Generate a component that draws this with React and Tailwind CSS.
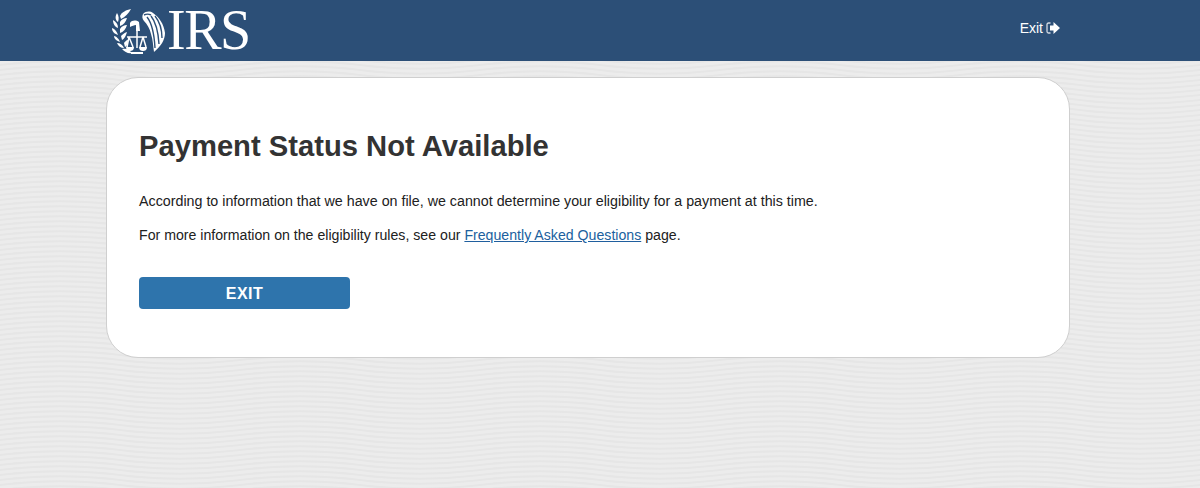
import { useId } from 'react';

const waveOffsets = [-10, -5, 0, 5, 10, 15];

function WavyBackground() {
  const id = useId();
  return (
    <svg className="absolute inset-0 w-full h-full" aria-hidden="true">
      <defs>
        <pattern id={id} width="240" height="5" patternUnits="userSpaceOnUse">
          {waveOffsets.map((y) => (
            <path
              key={y}
              d={`M0 ${y}C40 ${y - 5} 80 ${y - 5} 120 ${y}S200 ${y + 5} 240 ${y}`}
              fill="none"
              stroke="#e6e6e6"
              strokeWidth="2"
            />
          ))}
        </pattern>
      </defs>
      <rect width="100%" height="100%" fill={`url(#${id})`} />
    </svg>
  );
}

function Eagle() {
  return (
    <svg width="60" height="52" viewBox="0 0 60 52" fill="none" className="shrink-0">
      {/* laurel */}
      <g fill="#fff">
        <path d="M11 12C13 8 17 6 22 5C20 9 16 13 12 15z" />
        <path d="M8 9C10 12 10 15 9 18C6 16 6 12 8 9z" />
        <path d="M4 16C7 18 9 20 9 24C6 23 4 20 4 16z" />
        <path d="M11 18C13 15 15 14 18 14C17 18 14 21 11 22z" />
        <path d="M3 24C6 25 8 28 9 31C6 30 3 28 3 24z" />
        <path d="M11 25C13 22 15 21 18 21C17 25 14 28 11 29z" />
        <path d="M5 32C7 32 10 35 11 38C8 37 5 35 5 32z" />
        <path d="M12 32C14 30 15 29 18 28C17 32 15 35 13 36z" />
        <path d="M8 39C11 39 14 41 15 44C12 44 9 42 8 39z" />
        <path d="M15 39C16 38 17 36 19 36C19 39 18 42 16 43z" />
        <path d="M13 45C17 44 20 45 23 49C19 50 16 48 13 45z" />
      </g>
      {/* eagle head */}
      <path d="M21 19C23 16 27 16 30 18L31 27H27V21C25 21 23 22 21 23z" fill="#fff" />
      {/* scales */}
      <g stroke="#fff" strokeWidth="1.500">
        <path d="M28 20V44" />
        <path d="M18 33H38" />
        <path d="M20 33L18 43M20 33L24 43M34 33L31 43M34 33L37 43" />
      </g>
      <path d="M17 43H25C25 46 23 47 21 47S17 46 17 43zM30 43H38C38 46 36 47 34 47S30 46 30 43z" fill="#fff" />
      <path d="M22 48H34V50H22z" fill="#fff" />
      {/* wing */}
      <path
        d="M34 10C37 7 41 7 44 9C50 13 55 20 56 29C56 36 52 42 45 48C44 42 44 36 42 30C41 25 38 20 35 17C33 15 33 12 34 10z"
        fill="#fff"
      />
      <g stroke="#2c4f77" strokeWidth="1.400">
        <path d="M38 13C42 18 45 26 46 44" />
        <path d="M42 12C46 17 49 25 50 40" />
        <path d="M46 12C50 17 53 24 53 34" />
        <path d="M35 11C37 10 40 10 42 11" />
      </g>
    </svg>
  );
}

function ExitIcon() {
  return (
    <svg width="14" height="14" viewBox="0 0 14 14" className="shrink-0">
      <path d="M4.500 2H2.500A1.500 1.500 0 0 0 1 3.500v7A1.500 1.500 0 0 0 2.500 12h2" fill="none" stroke="#fff" strokeWidth="1.300" opacity="0.8" />
      <path d="M7.500 1L14 7L7.500 13V9.500H4V4.500H7.500z" fill="#fff" />
    </svg>
  );
}

export default function App() {
  return (
    <div className="relative min-h-screen bg-[#ececec] overflow-hidden font-['Liberation_Sans',Arial,sans-serif] text-[#212121]">
      <WavyBackground />

      <div className="relative">
        {/* Header */}
        <header className="h-[61px] bg-[#2c4f77] flex justify-between pl-[109px] pr-[140px]">
          <a href="#" className="flex items-start pt-[4px] text-white">
            <Eagle />
            <span className="font-['Liberation_Serif',serif] text-[56px] leading-[56px] tracking-[-1.5px] -mt-[2px] -ml-[2px]">IRS</span>
          </a>
          <a href="#" className="flex items-center gap-[3px] h-[56px] text-white text-[14px]">
            Exit
            <ExitIcon />
          </a>
        </header>

        {/* Card */}
        <main className="mt-4 ml-[106px] w-[964px] h-[281px] bg-white border border-[#cfcfcf] rounded-[32px] px-8 pt-[51px]">
          <h1 className="text-[29.2px] leading-[34px] font-bold text-[#333333]">Payment Status Not Available</h1>
          <p className="mt-[28px] text-[14.28px] leading-5">
            According to information that we have on file, we cannot determine your eligibility for a payment at this time.
          </p>
          <p className="mt-[14px] text-[14.15px] leading-5">
            For more information on the eligibility rules, see our{' '}
            <a href="#" className="text-[#205f9e] underline">Frequently Asked Questions</a> page.
          </p>
          <button className="mt-[32px] w-[211px] h-[32px] pt-px bg-[#2e74ac] rounded-[4px] text-white text-[16px] font-bold tracking-[0.5px]">
            EXIT
          </button>
        </main>
      </div>
    </div>
  );
}
